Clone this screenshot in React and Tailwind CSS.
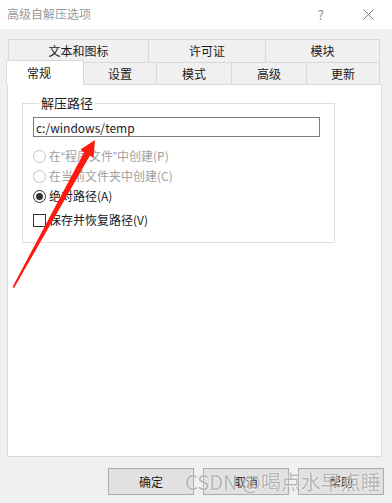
import { useState } from "react";

const font = { fontFamily: '"Microsoft YaHei", "Noto Sans CJK SC", sans-serif' };

function Radio({ checked, disabled, label, onClick }) {
  return (
    <div className="flex items-center h-[20px] cursor-default" onClick={onClick}>
      <span
        className={
          "w-[13px] h-[13px] rounded-full border flex items-center justify-center bg-white " +
          (disabled ? "border-[#c4c4c4]" : "border-[#333333]")
        }
      >
        {checked && <span className="w-[7px] h-[7px] rounded-full bg-[#333333]" />}
      </span>
      <span className={"ml-[3px] " + (disabled ? "text-[#a0a0a0]" : "text-[#1a1a1a]")}>{label}</span>
    </div>
  );
}

const q = (c) => <span style={{ fontFamily: '"Liberation Sans", sans-serif' }}>{c}</span>;

function App() {
  const [tab, setTab] = useState("常规");
  const [mode, setMode] = useState("abs");
  const [save, setSave] = useState(false);
  const [path, setPath] = useState("c:/windows/temp");

  const row2 = [
    ["常规", "w-[78px]"],
    ["设置", "w-[73px]"],
    ["模式", "w-[75px]"],
    ["高级", "w-[75px]"],
    ["更新", "w-[73px]"],
  ];

  return (
    <div className="relative w-[392px] h-[503px] bg-[#f0f0f0] text-[12px] text-[#1a1a1a] overflow-hidden" style={font}>
      {/* title bar */}
      <div className="h-[29px] bg-white flex items-center pl-[7px] text-[#9a9a9a]">
        <span className="-mt-[2px]">高级自解压选项</span>
        <span className="ml-auto mr-[39px] text-[13px] text-[#8a8a8a]">?</span>
        <svg width="11" height="11" viewBox="0 0 11 11" className="mr-[18px]">
          <path d="M0.5 0.5 L10.5 10.5 M10.5 0.5 L0.5 10.5" stroke="#7a7a7a" strokeWidth="1" />
        </svg>
      </div>

      {/* tabs */}
      <div className="mt-[10px] ml-[8px] flex w-[372px] h-[23px]">
        {[
          ["文本和图标", "w-[140px]"],
          ["许可证", "w-[117px]"],
          ["模块", "w-[115px]"],
        ].map(([t, w]) => (
          <div key={t} className={w + " border-t border-l border-[#d9d9d9] last:border-r flex items-center justify-center bg-[#f0f0f0]"}>
            {t}
          </div>
        ))}
      </div>
      <div className="ml-[6px] -mt-[3px] flex items-end h-[25px] relative z-10">
        {row2.map(([t, w]) =>
          t === tab ? (
            <div key={t} className={w + " h-[25px] -mb-[1px] bg-white border-t border-l border-r border-[#d9d9d9] flex items-center justify-center pr-[12px]"}>
              {t}
            </div>
          ) : (
            <div
              key={t}
              onClick={() => setTab(t)}
              className={w + " h-[22px] border-t border-r border-[#d9d9d9] flex items-center justify-center cursor-default"}
            >
              {t}
            </div>
          )
        )}
      </div>

      {/* panel */}
      <div className="ml-[7px] w-[375px] h-[373px] bg-white border border-[#d9d9d9] pt-[9px] pl-[14px]">
        <fieldset className="w-[313px] h-[149px] border border-[#dcdcdc] pl-[10px] pt-[5px]">
          <legend className="ml-[6px] px-[2px] text-[13px] leading-[18px]">解压路径</legend>
          <input
            className="w-[287px] h-[20px] border border-[#7a7a7a] px-[2px] text-[12px] text-[#1a1a2a] outline-none"
            value={path}
            onChange={(e) => setPath(e.target.value)}
          />
          <div className="mt-[9px]">
            <Radio disabled label={<>在{q("\u201C")}程序文件{q("\u201D")}中创建(P)</>} />
            <Radio disabled label="在当前文件夹中创建(C)" />
            <Radio checked={mode === "abs"} label="绝对路径(A)" onClick={() => setMode("abs")} />
          </div>
          <div className="flex items-center mt-[5px] cursor-default" onClick={() => setSave(!save)}>
            <span className="w-[13px] h-[13px] border border-[#333333] bg-white flex items-center justify-center text-[10px] leading-none">
              {save ? "✓" : ""}
            </span>
            <span className="ml-[3px]">保存并恢复路径(V)</span>
          </div>
        </fieldset>
      </div>

      {/* buttons */}
      <div className="flex justify-end gap-[9px] pr-[8px] mt-[11px]">
        {["确定", "取消", "帮助"].map((b) => (
          <button key={b} className="w-[86px] h-[27px] bg-[#e1e1e1] border border-[#adadad] flex items-center justify-center">
            {b}
          </button>
        ))}
      </div>

      {/* annotation arrow */}
      <svg className="absolute left-0 top-0 pointer-events-none" width="392" height="503">
        <polygon points="12.5,287 84,152.5 80.5,149.5 95,140 93.5,158 90,155.5 14,288" fill="#ff1a0d" />
      </svg>

      {/* watermark */}
      <div className="absolute left-[185px] top-[467px] text-[20px] text-[#9a9a9a]/70 pointer-events-none whitespace-nowrap" style={{ textShadow: "0 0 2px #fff" }}>
        CSDN @喝点水早点睡
      </div>
    </div>
  );
}

export default App;
